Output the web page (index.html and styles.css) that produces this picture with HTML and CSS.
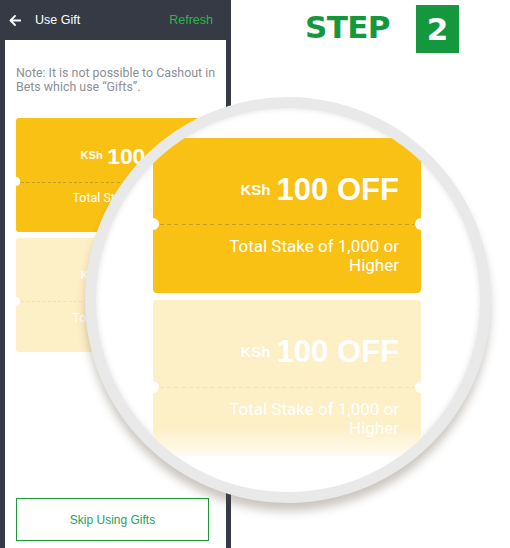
FILE: index.html
```html
<!DOCTYPE html>
<html lang="en">
<head>
<meta charset="utf-8">
<title>Use Gift — Step 2</title>
<link rel="stylesheet" href="styles.css">
</head>
<body>
<div class="page">
  <aside class="panel">
    <header class="bar">
      <svg class="back" width="12" height="11" viewBox="0 0 12 11" aria-hidden="true">
        <path d="M11.5 5.5H1.5M6 1L1.5 5.5 6 10" fill="none" stroke="#fff" stroke-width="1.8" stroke-linecap="round" stroke-linejoin="round"/>
      </svg>
      <span class="bar-title">Use Gift</span>
      <span class="bar-action">Refresh</span>
    </header>
    <main class="sheet">
      <p class="note">Note: It is not possible to Cashout in Bets which use “Gifts”.</p>
      <div class="coupons">
        <div class="coupon">
          <div class="coupon-top"><span class="cur">KSh</span><span class="amount">100 OFF</span></div>
          <div class="coupon-bottom"><p class="cond">Total Stake of 1,000 or Higher</p></div>
        </div>
        <div class="coupon coupon-off">
          <div class="coupon-top"><span class="cur">KSh</span><span class="amount">100 OFF</span></div>
          <div class="coupon-bottom"><p class="cond">Total Stake of 1,000 or Higher</p></div>
        </div>
      </div>
      <button class="skip" type="button">Skip Using Gifts</button>
    </main>
  </aside>
  <section class="hero">
    <div class="step"><span class="step-word">STEP</span><span class="step-num">2</span></div>
  </section>
  <div class="lens">
    <div class="lens-view">
      <div class="coupons coupons-big">
        <div class="coupon">
          <div class="coupon-top"><span class="cur">KSh</span><span class="amount">100 OFF</span></div>
          <div class="coupon-bottom"><p class="cond">Total Stake of 1,000 or Higher</p></div>
        </div>
        <div class="coupon coupon-off">
          <div class="coupon-top"><span class="cur">KSh</span><span class="amount">100 OFF</span></div>
          <div class="coupon-bottom"><p class="cond">Total Stake of 1,000 or Higher</p></div>
        </div>
      </div>
      <div class="lens-fade"></div>
    </div>
  </div>
</div>
</body>
</html>
```

FILE: styles.css
```css
* { box-sizing: border-box; }
html, body { margin: 0; padding: 0; background: #fff; }
body { font-family: "Liberation Sans", Arial, sans-serif; }

.page {
  position: relative;
  display: flex;
  width: 510px;
  height: 548px;
  overflow: hidden;
}

/* ---------- left phone panel ---------- */
.panel {
  width: 231px;
  height: 548px;
  background: #353a45;
  display: flex;
  flex-direction: column;
  padding: 0 5px;
}
.bar {
  height: 40px;
  display: flex;
  align-items: center;
  padding: 0 13px 0 4px;
  color: #fff;
  font-size: 12.5px;
}
.back { display: block; margin-right: 14px; }
.bar-title { flex: 1; }
.bar-action { color: #2fb44c; }

.sheet {
  flex: 1;
  background: #fff;
  display: flex;
  flex-direction: column;
  padding: 26px 8px 7px 11px;
}
.note {
  margin: 0;
  font-family: Roboto, "Liberation Sans", sans-serif;
  font-size: 12.4px;
  line-height: 14px;
  color: #8b9099;
}
.coupons {
  display: flex;
  flex-direction: column;
  gap: 0.45em;
  font-size: 11.8px;
  margin-top: 24px;
}
.skip {
  margin-top: auto;
  height: 43px;
  width: 193px;
  background: #fff;
  border: 1px solid #1c9a3c;
  color: #2a9f55;
  font-family: "Liberation Sans", Arial, sans-serif;
  font-size: 12px;
  padding: 0;
}

/* ---------- coupon (sized in em so it can be magnified) ---------- */
.coupon {
  position: relative;
  flex: none;
  width: 16.75em;
  height: 9.7em;
  border-radius: 0.25em;
  background: #f9c113;
  color: #fff;
  display: flex;
  flex-direction: column;
}
.coupon::before,
.coupon::after {
  content: "";
  position: absolute;
  top: 5.025em;
  width: 0.75em;
  height: 0.75em;
  border-radius: 50%;
  background: #fff;
}
.coupon::before { left: -0.375em; }
.coupon::after { right: -0.375em; }
.coupon-top {
  height: 5.4em;
  display: flex;
  justify-content: flex-end;
  align-items: flex-start;
  padding: 2.25em 1.375em 0 4.4em;
}
.cur {
  font-weight: bold;
  font-size: 0.94em;
  line-height: 1;
  margin-top: 0.53em;
  margin-right: 0.4em;
}
.amount {
  font-weight: bold;
  font-size: 1.94em;
  line-height: 1;
  white-space: nowrap;
}
.coupon-bottom {
  position: relative;
  flex: 1;
  padding: 0.8em 1.375em 0 4.4em;
  text-align: right;
}
.coupon-bottom::before {
  content: "";
  position: absolute;
  top: 0;
  left: 0.45em;
  right: 0.45em;
  height: 1px;
  background: repeating-linear-gradient(to right, #c89c1c 0 0.25em, transparent 0.25em 0.45em);
}
.cond {
  margin: 0;
  font-family: Roboto, "Liberation Sans", sans-serif;
  font-size: 1.0625em;
  line-height: 1.12em;
}
.coupon-off { background: #fdefc6; }
.coupon-off .coupon-bottom::before {
  background: repeating-linear-gradient(to right, #f1e0b2 0 0.25em, transparent 0.25em 0.45em);
}

/* ---------- right side heading ---------- */
.hero {
  flex: 1;
  padding: 5px 0 0 74px;
}
.step {
  display: flex;
  align-items: center;
  gap: 26px;
}
.step-word {
  font-family: "DejaVu Sans", Lato, sans-serif;
  font-weight: bold;
  font-size: 31px;
  letter-spacing: -0.6px;
  color: #15983d;
  line-height: 1;
  margin-top: -4px;
}
.step-num {
  width: 43px;
  height: 48px;
  background: #15983d;
  color: #fff;
  font-family: "DejaVu Sans", Lato, sans-serif;
  font-weight: bold;
  font-size: 31px;
  display: flex;
  align-items: center;
  justify-content: center;
}

/* ---------- magnifier lens ---------- */
.lens {
  position: absolute;
  left: 85px;
  top: 97px;
  width: 406px;
  height: 406px;
  border-radius: 50%;
  background: #e9e9e9;
  padding: 11px;
  box-shadow: 0 9px 10px -1px rgba(90, 75, 60, 0.32);
}
.lens-view {
  position: relative;
  width: 100%;
  height: 100%;
  border-radius: 50%;
  overflow: hidden;
  background: #fff;
  padding: 30px 0 0 57px;
  box-shadow: inset 0 0 6px rgba(0, 0, 0, 0.12);
}
.coupons-big {
  font-size: 16px;
  margin-top: 0;
}
.lens-fade {
  position: absolute;
  inset: 0;
  background: linear-gradient(to bottom, rgba(255,255,255,0) 0, rgba(255,255,255,0) 318px, #fff 360px);
}
```
